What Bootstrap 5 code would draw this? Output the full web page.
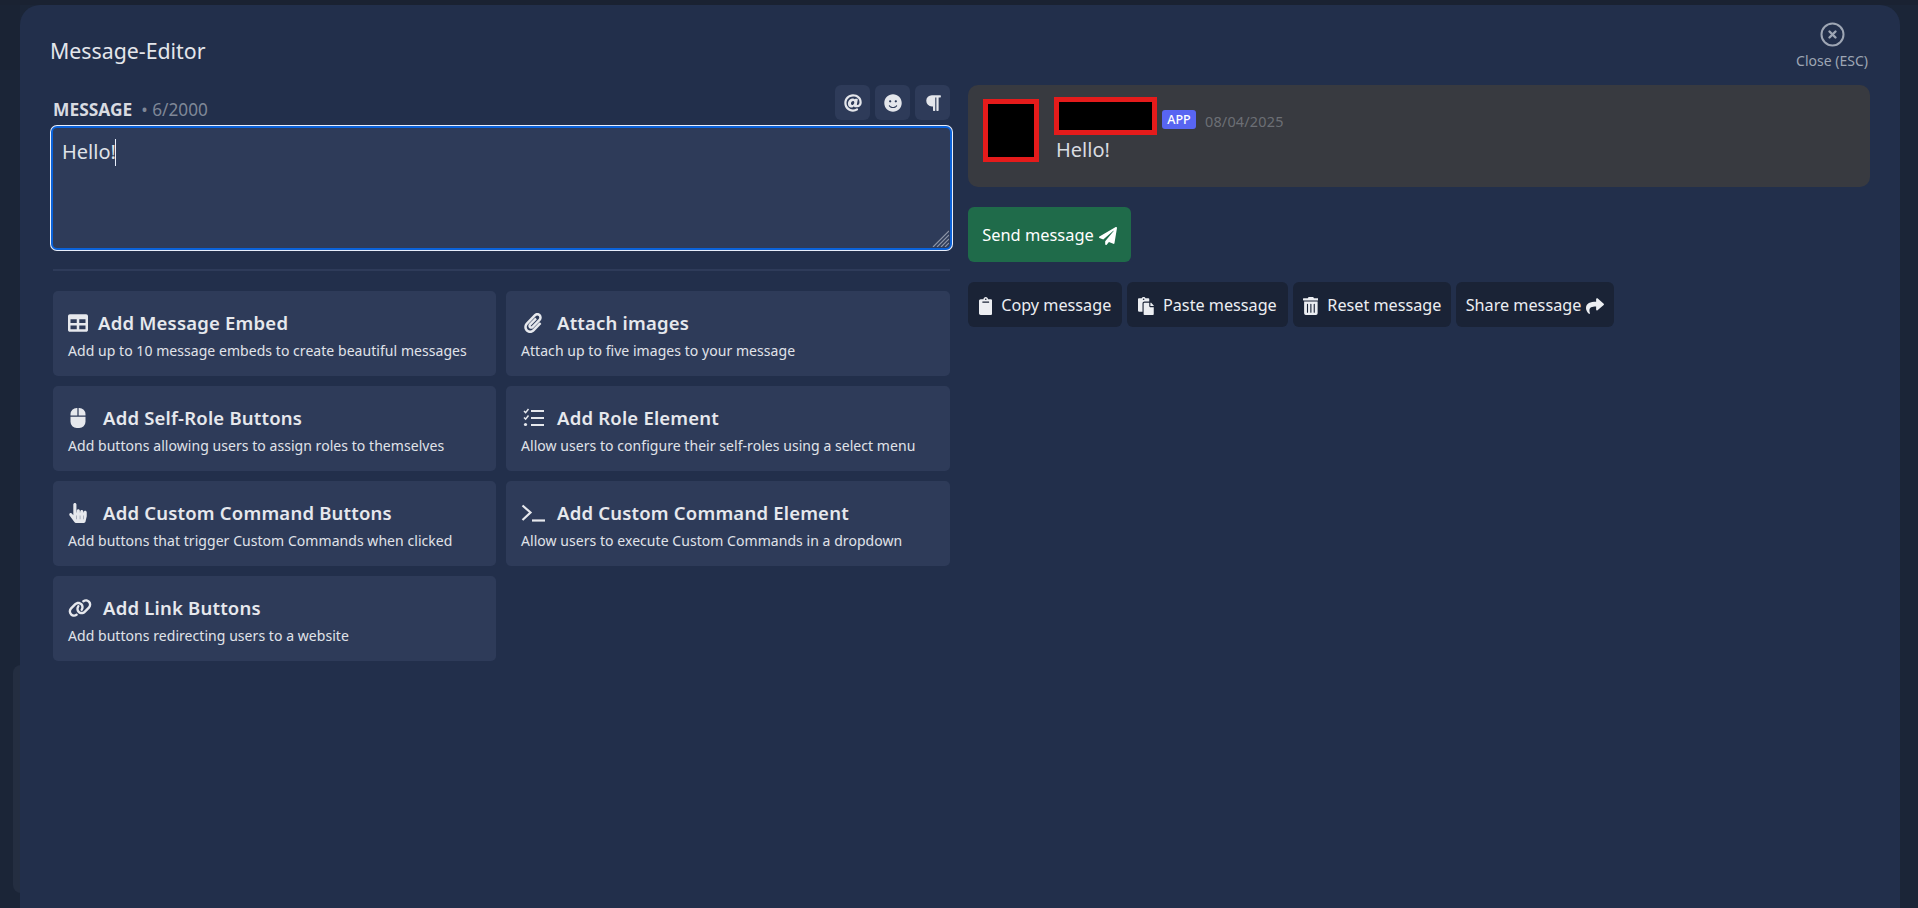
<!DOCTYPE html>
<html lang="en">
<head>
<meta charset="utf-8">
<title>Message-Editor</title>
<link href="https://cdn.jsdelivr.net/npm/bootstrap@5.3.0/dist/css/bootstrap.min.css" rel="stylesheet">
<style>
html,body{height:100%;overflow:hidden}
body{background:#1b2537;font-family:"Noto Sans","Open Sans",sans-serif;color:#e4e6eb;position:relative}
.ghost-bar{position:absolute;left:0;top:5px;width:20px;height:65px;background:#1a2334}
.ghost-card{position:absolute;left:13px;top:665px;width:10px;height:228px;background:#242e41;border-radius:8px 0 0 8px}
.top-strip{position:absolute;left:0;right:0;top:0;height:5px;background:#1a2232}
.editor-shell{position:relative;z-index:1;margin:5px 18px 0 20px;height:903px;background:#222f4b;border-radius:20px 20px 0 0;padding:0 30px}
.editor-head{height:80px;padding-top:30px;font-size:21.3px;line-height:32px}
.close-box{position:absolute;right:30px;top:17px;width:76px;color:#9ea6b4;font-size:14px;line-height:18px;text-align:center}
.close-box svg{display:block;margin:0 auto 5px;width:25px;height:25px}
.msg-head{height:40px;padding-left:3px;padding-right:3px}
.msg-meta{padding-top:11px}
.editor-cols{display:grid;grid-template-columns:1fr 1fr;column-gap:15px}
.msg-label{font-weight:700;font-size:17.4px;color:#d8dbe1;letter-spacing:0}
.msg-count{color:#7f8797;font-size:17.2px;margin-left:9px}
.tool-row{gap:5px}
.tool-btn{width:35px;height:35px;background:#2e3b59;border-radius:6px;color:#e4e6eb;display:flex;align-items:center;justify-content:center;border:0;padding:0}
.tool-btn svg{width:18px;height:18px}
.input-wrap{position:relative;padding:1px}
.msg-input.form-control{display:block;height:124px;background:#2e3b59;color:#dfe2e8;border:2px solid #0b62d9;box-shadow:0 0 0 1px #e8eefb;border-radius:6px;font-size:20px;line-height:28px;padding:10px 9px;font-family:inherit;resize:none}
.fake-caret{position:absolute;left:65px;top:14px;width:1px;height:27px;background:#e8eefb}
.fake-grip{position:absolute;right:4px;bottom:4px;width:18px;height:18px;pointer-events:none}
.msg-rule{height:2px;background:#2e3b59;margin:18px 3px 20px}
.act-grid{display:grid;grid-template-columns:443px 444px;column-gap:10px;row-gap:10px;padding:0 3px}
.act-tile{height:85px;background:#2e3b59;border-radius:5px;padding:19px 15px 0}
.act-title{font-size:18.5px;font-weight:600;line-height:26px;display:flex;align-items:center;color:#e6e8ed;letter-spacing:.2px}
.act-ico{width:20px;height:20px;flex:none;margin-right:15px;display:flex;align-items:center;justify-content:center}
.act-ico.plain{margin-right:10px}
.act-ico.rcol{width:24px;margin-right:12px}
.act-ico.lnk{width:24px;margin-right:11px}
.act-ico svg{height:100%;width:100%;display:block}
.act-desc{font-size:14px;line-height:20px;margin-top:5px;color:#e0e3e9;letter-spacing:.05px}
.preview-box{height:102px;background:#383a40;border-radius:10px;padding:14px 15px;display:flex}
.ava-mask{width:56px;height:63px;background:#000;border:5px solid #e51b1b;flex:none}
.pre-body{margin-left:15px}
.name-line{display:flex;align-items:flex-end}
.name-mask{width:103px;height:38px;background:#000;border:5px solid #e51b1b;margin-top:-2px}
.app-tag.badge{background:#5865f2;border-radius:3px;font-size:12.5px;font-weight:500;padding:0;width:34px;height:19px;line-height:19px;margin-left:5px;margin-bottom:6px}
.pre-date{font-size:14.4px;color:#6c6f75;margin-left:9px;margin-bottom:3px;line-height:20px;letter-spacing:.2px}
.pre-text{font-size:20px;line-height:28px;color:#d9dce0;margin:1px 0 0 2px}
.send-btn.btn{background:#1f6b4a;border:0;border-radius:6px;color:#fff;height:55px;width:163px;padding:2px 0 0;font-size:16.4px;margin-top:20px;display:flex;align-items:center;justify-content:center;gap:5px}
.send-btn svg{width:18px;height:18px}
.sub-row{margin-top:20px;gap:5px}
.sub-btn.btn{background:#1a2336;border:0;border-radius:6px;color:#eceef2;height:45px;padding:2px 0 0;font-size:16.2px;display:flex;align-items:center;justify-content:center;gap:9px}
.sub-btn svg{height:18px;width:auto}
.sub-btn.w-share{gap:5px}
.w-copy{width:154px}.w-paste{width:161px}.w-reset{width:158px}.w-share{width:158px}
</style>
</head>
<body>
<div class="top-strip"></div>
<div class="ghost-bar"></div>
<div class="ghost-card"></div>
<div class="editor-shell">
  <div class="close-box">
    <svg viewBox="0 0 25 25" fill="none" stroke="currentColor"><circle cx="12.5" cy="12.5" r="11" stroke-width="2"/><path d="M9.5 9.5l6 6M15.5 9.5l-6 6" stroke-width="2.4" stroke-linecap="round"/></svg>
    Close (ESC)
  </div>
  <div class="editor-head">Message-Editor</div>
  <div class="editor-cols">
    <div>
      <div class="msg-head d-flex justify-content-between">
        <div class="msg-meta"><span class="msg-label">MESSAGE</span><span class="msg-count">• 6/2000</span></div>
        <div class="d-flex tool-row align-items-start">
          <button class="tool-btn" type="button"><svg viewBox="0 0 512 512" fill="currentColor"><path d="M256 8C118.941 8 8 118.919 8 256c0 137.059 110.919 248 248 248 48.154 0 95.342-14.14 135.408-40.223 12.005-7.815 14.625-24.288 5.552-35.372l-10.177-12.433c-7.671-9.371-21.179-11.667-31.373-5.129C325.92 429.757 291.314 440 256 440c-101.458 0-184-82.542-184-184S154.542 72 256 72c100.139 0 184 57.619 184 160 0 38.786-21.093 79.742-58.17 83.693-17.349-.454-16.91-12.857-13.476-30.024l23.433-121.11C394.653 149.75 383.308 136 368.225 136h-44.981a13.518 13.518 0 0 0-13.432 11.993l-.01.092c-14.697-17.901-40.448-21.775-59.971-21.775-74.58 0-137.831 62.234-137.831 151.46 0 65.303 36.785 105.87 96 105.87 26.984 0 57.369-15.637 74.991-38.333 9.522 34.104 40.613 34.103 70.71 34.103C462.609 379.41 504 307.798 504 232 504 95.653 394.023 8 256 8zm-21.68 304.43c-22.249 0-36.07-15.623-36.07-40.771 0-44.993 30.779-72.729 58.63-72.729 22.292 0 35.601 15.241 35.601 40.77 0 45.061-33.875 72.73-58.161 72.73z"/></svg></button>
          <button class="tool-btn" type="button"><svg viewBox="0 0 496 512" fill="currentColor"><path d="M248 8C111 8 0 119 0 256s111 248 248 248 248-111 248-248S385 8 248 8zm80 168c17.7 0 32 14.3 32 32s-14.3 32-32 32-32-14.3-32-32 14.3-32 32-32zm-160 0c17.7 0 32 14.3 32 32s-14.3 32-32 32-32-14.3-32-32 14.3-32 32-32zm194.8 170.2C334.3 380.4 292.5 400 248 400s-86.3-19.6-114.8-53.8c-13.6-16.3 11-36.7 24.6-20.5 22.4 26.9 55.2 42.2 90.2 42.2s67.8-15.4 90.2-42.2c13.4-16.2 38.1 4.2 24.6 20.5z"/></svg></button>
          <button class="tool-btn" type="button"><svg viewBox="0 0 448 512" fill="currentColor"><path d="M448 48v32a16 16 0 0 1-16 16h-48v368a16 16 0 0 1-16 16h-32a16 16 0 0 1-16-16V96h-32v368a16 16 0 0 1-16 16h-32a16 16 0 0 1-16-16V352h-32a160 160 0 0 1 0-320h240a16 16 0 0 1 16 16z"/></svg></button>
        </div>
      </div>
      <div class="input-wrap">
        <textarea class="form-control msg-input">Hello!</textarea>
        <span class="fake-caret"></span>
        <svg class="fake-grip" viewBox="0 0 18 18" stroke="#8d95a6" stroke-width="1.2"><path d="M18 2L2 18M18 6L6 18M18 10L10 18M18 14L14 18"/></svg>
      </div>
      <div class="msg-rule"></div>
      <div class="act-grid">
        <div class="act-tile"><div class="act-title"><span class="act-ico plain"><svg viewBox="0 0 512 512" fill="currentColor"><path d="M464 32H48C21.49 32 0 53.49 0 80v352c0 26.51 21.49 48 48 48h416c26.51 0 48-21.49 48-48V80c0-26.51-21.49-48-48-48zM224 416H64v-96h160v96zm0-160H64v-96h160v96zm224 160H288v-96h160v96zm0-160H288v-96h160v96z"/></svg></span>Add Message Embed</div><div class="act-desc">Add up to 10 message embeds to create beautiful messages</div></div>
        <div class="act-tile"><div class="act-title"><span class="act-ico rcol"><svg viewBox="0 0 448 512" fill="currentColor"><path d="M43.246 466.142c-58.43-60.289-57.341-157.511 1.386-217.581L254.392 34c44.316-45.332 116.351-45.336 160.671 0 43.89 44.894 43.943 117.329 0 162.276L232.214 383.128c-29.855 30.537-78.633 30.111-107.982-.998-28.275-29.97-27.368-77.473 1.452-106.953l143.743-146.835c6.182-6.314 16.312-6.422 22.626-.241l22.861 22.379c6.315 6.182 6.422 16.312.241 22.626L171.427 319.927c-4.932 5.045-5.236 13.428-.648 18.292 4.372 4.634 11.245 4.711 15.688.165l182.849-186.851c19.613-20.062 19.613-52.725-.011-72.798-19.189-19.627-49.957-19.637-69.154 0L90.39 293.295c-34.763 35.56-35.299 93.12-1.191 128.313 34.01 35.093 88.985 35.137 123.058.286l172.06-175.999c6.177-6.319 16.307-6.433 22.626-.256l22.877 22.364c6.319 6.177 6.434 16.307.256 22.626l-172.06 175.998c-59.576 60.938-155.943 60.216-214.77-.485z"/></svg></span>Attach images</div><div class="act-desc">Attach up to five images to your message</div></div>
        <div class="act-tile"><div class="act-title"><span class="act-ico"><svg viewBox="0 0 384 512" fill="currentColor"><path d="M0 352a160 160 0 0 0 160 160h64a160 160 0 0 0 160-160V224H0zM176 0h-16A160 160 0 0 0 0 160v32h176zm48 0h-16v192h176v-32A160 160 0 0 0 224 0z"/></svg></span>Add Self-Role Buttons</div><div class="act-desc">Add buttons allowing users to assign roles to themselves</div></div>
        <div class="act-tile"><div class="act-title"><span class="act-ico rcol"><svg viewBox="0 0 24 20" fill="none" stroke="currentColor"><path d="M3 3l1.6 1.6L7.5 1M3 9.5l1.6 1.6L7.5 7.5" stroke-width="1.5"/><circle cx="4.5" cy="16.5" r="1.6" fill="currentColor" stroke="none"/><path d="M10 3h13M10 10h13M10 17h13" stroke-width="2"/></svg></span>Add Role Element</div><div class="act-desc">Allow users to configure their self-roles using a select menu</div></div>
        <div class="act-tile"><div class="act-title"><span class="act-ico"><svg viewBox="0 0 448 512" fill="currentColor"><path d="M448 240v96c0 3.084-.356 6.159-1.063 9.162l-32 136C410.686 499.23 394.562 512 376 512H168a40.004 40.004 0 0 1-32.35-16.473l-127.997-176c-12.993-17.866-9.043-42.883 8.822-55.876 17.867-12.994 42.884-9.043 55.877 8.823L104 315.992V40c0-22.091 17.908-40 40-40s40 17.909 40 40v200h8v-40c0-22.091 17.908-40 40-40s40 17.909 40 40v40h8v-24c0-22.091 17.908-40 40-40s40 17.909 40 40v24h8c0-22.091 17.908-40 40-40s40 17.909 40 40zm-256 80h-8v96h8v-96zm88 0h-8v96h8v-96zm88 0h-8v96h8v-96z"/></svg></span>Add Custom Command Buttons</div><div class="act-desc">Add buttons that trigger Custom Commands when clicked</div></div>
        <div class="act-tile"><div class="act-title"><span class="act-ico rcol"><svg viewBox="0 0 24 18" fill="none" stroke="currentColor" stroke-width="2.2"><path d="M1.5 1.5L9.5 8.5 1.5 16"/><path d="M11 16.5H24"/></svg></span>Add Custom Command Element</div><div class="act-desc">Allow users to execute Custom Commands in a dropdown</div></div>
        <div class="act-tile"><div class="act-title"><span class="act-ico lnk"><svg viewBox="0 0 640 512" fill="currentColor"><path d="M579.8 267.7c56.5-56.5 56.5-148 0-204.5c-50-50-128.8-56.5-186.3-15.4l-1.6 1.1c-14.4 10.3-17.7 30.3-7.4 44.6s30.3 17.7 44.6 7.4l1.6-1.1c32.1-22.9 76-19.3 103.8 8.6c31.5 31.5 31.5 82.5 0 114L422.3 334.8c-31.5 31.5-82.5 31.5-114 0c-27.9-27.9-31.5-71.8-8.6-103.8l1.1-1.6c10.3-14.4 6.9-34.4-7.4-44.6s-34.4-6.9-44.6 7.4l-1.1 1.6C206.5 251.2 213 330 263 380c56.5 56.5 148 56.5 204.5 0L579.8 267.7zM60.2 244.3c-56.5 56.5-56.5 148 0 204.5c50 50 128.8 56.5 186.3 15.4l1.6-1.1c14.4-10.3 17.7-30.3 7.4-44.6s-30.3-17.7-44.6-7.4l-1.6 1.1c-32.1 22.9-76 19.3-103.8-8.6C74 372 74 321 105.5 289.5L217.7 177.2c31.5-31.5 82.5-31.5 114 0c27.9 27.9 31.5 71.8 8.6 103.9l-1.1 1.6c-10.3 14.4-6.9 34.4 7.4 44.6s34.4 6.9 44.6-7.4l1.1-1.6C433.5 260.8 427 182 377 132c-56.5-56.5-148-56.5-204.5 0L60.2 244.3z"/></svg></span>Add Link Buttons</div><div class="act-desc">Add buttons redirecting users to a website</div></div>
      </div>
    </div>
    <div>
      <div class="preview-box">
        <div class="ava-mask"></div>
        <div class="pre-body">
          <div class="name-line"><div class="name-mask"></div><span class="badge app-tag">APP</span><span class="pre-date">08/04/2025</span></div>
          <div class="pre-text">Hello!</div>
        </div>
      </div>
      <button class="btn send-btn" type="button">Send message<svg viewBox="0 0 512 512" fill="currentColor"><path d="M476 3.2L12.5 270.6c-18.1 10.4-15.8 35.6 2.2 43.2L121 358.4l287.3-253.2c5.5-4.9 13.3 2.6 8.6 8.3L176 407v80.5c0 23.6 28.5 32.9 42.5 15.8L282 426l124.6 52.2c14.2 6 30.4-2.9 33-18.2l72-432C515 7.8 493.3-6.8 476 3.2z"/></svg></button>
      <div class="d-flex sub-row">
        <button class="btn sub-btn w-copy" type="button"><svg viewBox="0 0 384 512" fill="currentColor"><path d="M384 112v352c0 26.51-21.49 48-48 48H48c-26.51 0-48-21.49-48-48V112c0-26.51 21.49-48 48-48h80c0-35.29 28.71-64 64-64s64 28.71 64 64h80c26.51 0 48 21.49 48 48zM192 40c-13.255 0-24 10.745-24 24s10.745 24 24 24 24-10.745 24-24-10.745-24-24-24m96 114v-20a6 6 0 0 0-6-6H102a6 6 0 0 0-6 6v20a6 6 0 0 0 6 6h180a6 6 0 0 0 6-6z"/></svg>Copy message</button>
        <button class="btn sub-btn w-paste" type="button"><svg viewBox="0 0 448 512" fill="currentColor"><path d="M128 184c0-30.879 25.122-56 56-56h136V56c0-13.255-10.745-24-24-24h-80.61C204.306 12.89 183.637 0 160 0s-44.306 12.89-55.39 32H24C10.745 32 0 42.745 0 56v336c0 13.255 10.745 24 24 24h104V184zm32-144c13.255 0 24 10.745 24 24s-10.745 24-24 24-24-10.745-24-24 10.745-24 24-24zm184 248h104v200c0 13.255-10.745 24-24 24H184c-13.255 0-24-10.745-24-24V184c0-13.255 10.745-24 24-24h136v104c0 13.2 10.8 24 24 24zm104-38.059V256h-96v-96h6.059a24 24 0 0 1 16.97 7.029l65.941 65.941a24.002 24.002 0 0 1 7.03 16.971z"/></svg>Paste message</button>
        <button class="btn sub-btn w-reset" type="button"><svg viewBox="0 0 448 512" fill="currentColor"><path d="M32 464a48 48 0 0 0 48 48h288a48 48 0 0 0 48-48V128H32zm272-256a16 16 0 0 1 32 0v224a16 16 0 0 1-32 0zm-96 0a16 16 0 0 1 32 0v224a16 16 0 0 1-32 0zm-96 0a16 16 0 0 1 32 0v224a16 16 0 0 1-32 0zM432 32H312l-9.4-18.7A24 24 0 0 0 281.1 0H166.8a23.72 23.72 0 0 0-21.4 13.3L136 32H16A16 16 0 0 0 0 48v32a16 16 0 0 0 16 16h416a16 16 0 0 0 16-16V48a16 16 0 0 0-16-16z"/></svg>Reset message</button>
        <button class="btn sub-btn w-share" type="button">Share message<svg viewBox="0 0 512 512" fill="currentColor"><path d="M503.691 189.836L327.687 37.851C312.281 24.546 288 35.347 288 56.015v80.053C127.371 137.907 0 170.1 0 322.326c0 61.441 39.581 122.309 83.333 154.132 13.653 9.931 33.111-2.533 28.077-18.631C66.066 312.814 132.917 274.316 288 272.085V360c0 20.7 24.3 31.453 39.687 18.164l176.004-152c11.071-9.562 11.086-26.753 0-36.328z"/></svg></button>
      </div>
    </div>
  </div>
</div>
<script src="https://cdn.jsdelivr.net/npm/bootstrap@5.3.0/dist/js/bootstrap.bundle.min.js"></script>
</body>
</html>
